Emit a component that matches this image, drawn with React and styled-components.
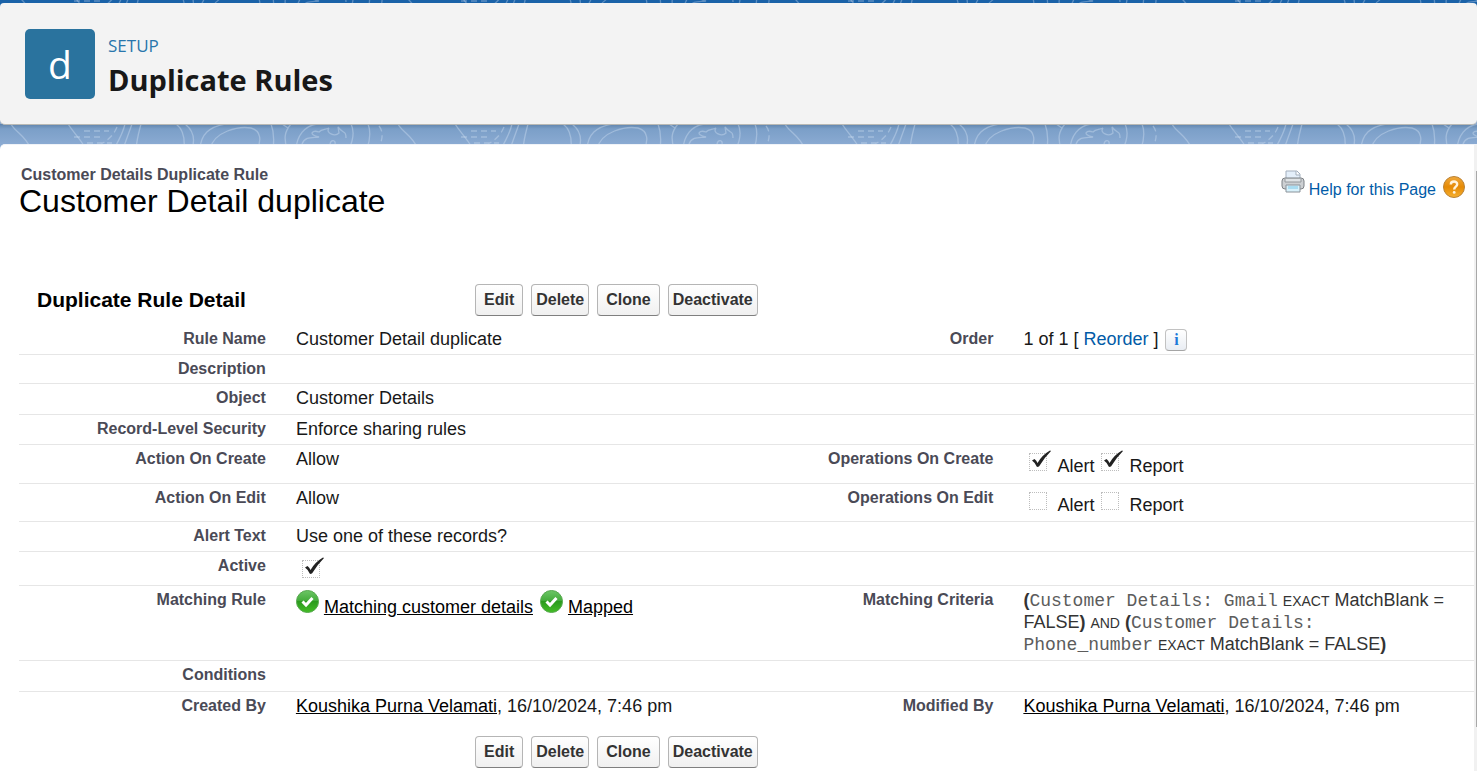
import React from "react";
import styled, { createGlobalStyle } from "styled-components";

const Global = createGlobalStyle`
  *, *::before, *::after { box-sizing: border-box; }
  body {
    margin: 0;
    background: #8aaad2;
    font-family: "Liberation Sans", Arial, sans-serif;
    color: #181818;
  }
`;

const Page = styled.div`
  display: flex;
  flex-direction: column;
  min-height: 100vh;
`;

const TopStrip = styled.div`
  height: 8px;
  margin-bottom: -5px;
  overflow: hidden;
  background: #1a62a8;
`;

const HeaderCard = styled.header`
  position: relative;
  display: flex;
  align-items: flex-start;
  gap: 13px;
  height: 122px;
  padding: 26px 25px;
  background: #f3f3f3;
  border-bottom: 1px solid #b9b9b4;
  border-radius: 4px 4px 5px 5px;
`;

const Tile = styled.div`
  width: 70px;
  height: 70px;
  border-radius: 5px;
  background: #2a739e;
  color: #fff;
  font: 39px/70px "Open Sans", "Noto Sans", sans-serif;
  text-align: center;
`;

const Titles = styled.div`
  display: flex;
  flex-direction: column;
  padding-top: 4px;
  font-family: "Open Sans", "Noto Sans", sans-serif;
`;

const Eyebrow = styled.span`
  color: #2876ac;
  font-size: 17px;
  line-height: 25px;
`;

const PageTitle = styled.h1`
  margin: 0;
  font-size: 29px;
  line-height: 44px;
  font-weight: 700;
  color: #181818;
`;

const Band = styled.div`
  height: 25px;
  margin: -1px 0 -5px;
  background: linear-gradient(#5f83ab, #7b9fc8 5px, #8aaad2 20px);
  overflow: hidden;
`;

const Panel = styled.main`
  position: relative;
  flex: 1;
  display: flex;
  background: #fff;
  border-top: 1px solid #f0f3f8;
  border-radius: 5px 0 0 0;
`;

const Content = styled.div`
  flex: 1;
  min-width: 0;
  padding: 21px 0 3px 19px;
`;

const ScrollTrack = styled.div`
  width: 3px;
  padding: 26px 0 44px 2px;
  background: #f1f1f1;
`;

const ScrollThumb = styled.div`
  height: 100%;
  background: #a8a8a8;
`;

const Intro = styled.div`
  display: flex;
  justify-content: space-between;
  height: 118px;
`;

const RecordType = styled.div`
  padding-left: 2px;
  font-size: 16px;
  line-height: 18px;
  font-weight: 700;
  color: #4a4a56;
`;

const RecordName = styled.h2`
  margin: 0;
  font-size: 32px;
  line-height: 34px;
  font-weight: 400;
  color: #000;
`;

const Help = styled.div`
  display: flex;
  align-items: flex-start;
  padding: 4px 9px 0 0;
`;

const HelpLink = styled.a`
  display: flex;
  align-items: flex-start;
  color: #015ba7;
  font-size: 16px;
  line-height: 18px;
  text-decoration: none;
`;

const HelpText = styled.span`
  padding: 11px 7px 0 4px;
`;

const HelpMark = styled.span`
  padding-top: 6px;
`;

const Toolbar = styled.div`
  display: flex;
  align-items: center;
  gap: 8px;
  height: 32px;
  padding-left: ${(p) => (p.$indent ? "456px" : "18px")};
`;

const SectionTitle = styled.h3`
  width: 430px;
  margin: 0;
  font-size: 21px;
  line-height: 32px;
  font-weight: 700;
  color: #000;
`;

const ActionButton = styled.button`
  height: 32px;
  padding: 0 ${(p) => (p.$roomy ? "8px" : "4px")} 1px;
  border: 1px solid #b5b5b5;
  border-bottom-color: #7f7f7f;
  border-radius: 4px;
  background: linear-gradient(#fff, #f0f0f0);
  color: #333;
  font: 700 16px/18px "Liberation Sans", Arial, sans-serif;
`;

const Details = styled.table`
  width: 100%;
  margin: 9px 0 12px;
  table-layout: fixed;
  border-collapse: collapse;
`;

const Row = styled.tr`
  height: ${(p) => p.$h}px;
  border-bottom: ${(p) => (p.$last ? "0" : "1px solid #e6e6e6")};
`;

const Label = styled.th`
  width: 18%;
  padding: 3px 15px 0;
  vertical-align: top;
  text-align: right;
  font-size: 16px;
  line-height: 22px;
  font-weight: 700;
  color: #4a4a56;
`;

const Value = styled.td`
  width: 32%;
  padding: 3px 15px 0;
  vertical-align: top;
  font-size: 18px;
  line-height: 22px;
  white-space: ${(p) => (p.$wrap ? "normal" : "nowrap")};
`;

const Line = styled.div`
  display: flex;
  align-items: flex-start;
`;

const BlueLink = styled.a`
  color: #015ba7;
  text-decoration: none;
`;

const BlackLink = styled.a`
  color: #000;
  text-decoration: underline;
`;

const InfoButton = styled.button`
  display: flex;
  align-items: center;
  justify-content: center;
  width: 22px;
  height: 22px;
  margin: 1px 0 0 7px;
  padding: 0;
  border: 1px solid #c2c2c2;
  border-bottom-color: #a5a5a5;
  border-radius: 4px;
  background: linear-gradient(#fff, #e9edf3);
  color: #1c7ad9;
  font: 700 16px/20px "Liberation Serif", serif;
`;

const Option = styled.label`
  display: flex;
  align-items: flex-start;
`;

const BoxWrap = styled.span`
  position: relative;
  display: block;
  width: 28px;
  height: 22px;
  padding: ${(p) => (p.$low ? "5px 0 0 6px" : "5px 0 0 0")};
`;

const Box = styled.input`
  appearance: none;
  display: block;
  width: 18px;
  height: 18px;
  margin: 0;
  border: 1px dotted #bdbdbd;
  background: #fff;
`;

const Tick = styled.svg`
  position: absolute;
  left: ${(p) => (p.$low ? "8px" : "2px")};
  top: 2px;
`;

const OptionText = styled.span`
  padding: 7px 7px 0 0;
`;

const Options = styled(Line)`
  padding-left: 6px;
`;

const Badge = styled.svg`
  flex: none;
  margin: ${(p) => (p.$next ? "1px 5px 0 7px" : "1px 5px 0 0")};
`;

const RuleLink = styled(BlackLink)`
  padding-top: 7px;
`;

const Criteria = styled.div`
  padding-right: 9px;
  color: #333;
`;

const Word = styled.span`
  white-space: nowrap;
`;

const Field = styled(Word)`
  font-family: "Liberation Mono", "Courier New", monospace;
  font-size: 18px;
  line-height: 18px;
  color: #5c5c5c;
`;

const FieldSpace = styled.span`
  font-family: "Liberation Mono", "Courier New", monospace;
  line-height: 18px;
`;

const Operator = styled.span`
  font-size: 14px;
  line-height: 18px;
`;

function Contours({ id, opacity, shift }) {
  return (
    <svg width="100%" height="25" aria-hidden="true">
      <defs>
        <pattern id={id} x="13" y={shift} width="387" height="25" patternUnits="userSpaceOnUse">
          <g fill="none" stroke="#d3e0f2" strokeOpacity={opacity} strokeWidth="1.3">
            <path d="M-2 0C2 8 12 11 18 25M55 0C60 8 66 13 73 25M112 0C110 9 107 14 101 25M119 0L110 25M128 0C126 8 124 14 123 25" />
            <path d="M163 0C170 5 172 14 171 25M172 0C181 7 182 16 179 25M187 25C188 10 196 3 212 0M197 25C201 7 226 2 238 4C249 7 248 18 244 25M258 0Q262 10 260 25M269 0L275 4M278 0C271 8 271 15 274 25" />
            <path d="M283 25C284 12 291 2 304 0M338 0Q343 10 336 25M355 0Q359 10 354 25M289 20C292 12 300 14 306 13C294 10 300 6 306 8C309 5 312 6 316 4C312 9 322 13 326 9L325 3C330 10 333 6 333 14M317 20C318 15 323 16 322 20" />
            <path d="M385 0C389 8 399 11 405 25" />
            <path strokeDasharray="6 4" d="M71 7H96M61 13H90M74 19H99M104 3C101 10 97 15 88 20M366 2Q371 8 368 18" />
          </g>
        </pattern>
      </defs>
      <rect width="100%" height="25" fill={`url(#${id})`} />
    </svg>
  );
}

function Printer() {
  return (
    <svg width="24" height="24" viewBox="0 0 24 24" aria-hidden="true">
      <path d="M5 10V1h11l3 3v6z" fill="#e4effa" stroke="#a3afbd" />
      <path d="M15 1v4h4" fill="#fff" stroke="#a3afbd" />
      <rect x="1" y="8" width="22" height="11" rx="3" fill="#cdd0d3" stroke="#7d8186" />
      <path d="M4 9v3h16V9" fill="#dfe3e6" stroke="#94989d" />
      <path d="M5 15h14v7H5z" fill="#d8f1fb" stroke="#8b9299" />
      <path d="M7 16h10v3H7z" fill="#a9dcf1" />
    </svg>
  );
}

function HelpBall() {
  return (
    <svg width="22" height="22" viewBox="0 0 22 22" aria-hidden="true">
      <defs>
        <linearGradient id="ball" x1="0" y1="0" x2="0" y2="1">
          <stop offset="0" stopColor="#f0a93c" />
          <stop offset=".5" stopColor="#e58a05" />
          <stop offset="1" stopColor="#f6b030" />
        </linearGradient>
      </defs>
      <circle cx="11" cy="11" r="10.5" fill="url(#ball)" stroke="#b98236" />
      <path d="M7.8 8.4C7.8 4.6 14.2 4.6 14.2 8.2C14.2 10.6 11.2 10.6 11.2 13.4" fill="none" stroke="#fff3dc" strokeWidth="2.4" />
      <circle cx="11.2" cy="16.4" r="1.4" fill="#fff3dc" />
    </svg>
  );
}

function Check({ low, checked, ...rest }) {
  return (
    <BoxWrap $low={low}>
      <Box type="checkbox" checked={checked} readOnly {...rest} />
      {checked && (
        <Tick $low={low} width="20" height="20" viewBox="0 0 20 20" aria-hidden="true">
          <path d="M1 10.5L3.5 9Q5.5 10.5 6.5 13Q11 5 19 0.5L20 1Q13 8 8 16.5L6 17Q4 12.5 1 10.5Z" fill="#222" />
        </Tick>
      )}
    </BoxWrap>
  );
}

function GreenBadge({ next }) {
  const id = next ? "green-b" : "green-a";
  return (
    <Badge $next={next} width="23" height="23" viewBox="0 0 23 23" aria-hidden="true">
      <defs>
        <linearGradient id={id} x1="0" y1="0" x2="0" y2="1">
          <stop offset="0" stopColor="#6cc566" />
          <stop offset=".45" stopColor="#45ad3c" />
          <stop offset=".5" stopColor="#2b9a1e" />
          <stop offset="1" stopColor="#43bd25" />
        </linearGradient>
      </defs>
      <circle cx="11.5" cy="11.5" r="11" fill={`url(#${id})`} stroke="#56a84e" />
      <path d="M6.5 11.5L10 15L16.5 8" fill="none" stroke="#fff" strokeWidth="3" />
    </Badge>
  );
}

function Buttons() {
  return (
    <>
      <ActionButton type="button" $roomy>Edit</ActionButton>
      <ActionButton type="button">Delete</ActionButton>
      <ActionButton type="button" $roomy>Clone</ActionButton>
      <ActionButton type="button">Deactivate</ActionButton>
    </>
  );
}

function Operations({ checked }) {
  return (
    <Options>
      <Option><Check checked={checked} /><OptionText>Alert</OptionText></Option>
      <Option><Check checked={checked} /><OptionText>Report</OptionText></Option>
    </Options>
  );
}

function Person() {
  return (
    <>
      <BlackLink href="#user">Koushika Purna Velamati</BlackLink>, 16/10/2024, 7:46 pm
    </>
  );
}

const rows = [
  { h: 29, label: "Rule Name", value: "Customer Detail duplicate", label2: "Order",
    value2: (
      <Line>
        <span>1 of 1 [ <BlueLink href="#reorder">Reorder</BlueLink> ]</span>
        <InfoButton type="button" aria-label="Order information">i</InfoButton>
      </Line>
    ) },
  { h: 29, label: "Description" },
  { h: 31, label: "Object", value: "Customer Details" },
  { h: 30, label: "Record-Level Security", value: "Enforce sharing rules" },
  { h: 39, label: "Action On Create", value: "Allow", label2: "Operations On Create", value2: <Operations checked /> },
  { h: 38, label: "Action On Edit", value: "Allow", label2: "Operations On Edit", value2: <Operations checked={false} /> },
  { h: 30, label: "Alert Text", value: "Use one of these records?" },
  { h: 34, label: "Active", value: <Check low checked aria-label="Active" /> },
  { h: 75, label: "Matching Rule",
    value: (
      <Line>
        <GreenBadge />
        <RuleLink href="#matching">Matching customer details</RuleLink>
        <GreenBadge next />
        <RuleLink href="#mapped">Mapped</RuleLink>
      </Line>
    ),
    label2: "Matching Criteria",
    wrap: true,
    value2: (
      <Criteria>
        <b>(</b><Field>Customer Details:</Field><FieldSpace> </FieldSpace><Field>Gmail</Field>{" "}
        <Operator>EXACT</Operator> <Word>MatchBlank =</Word> <Word>FALSE<b>)</b></Word>{" "}
        <Operator>AND</Operator> <b>(</b><Field>Customer Details:</Field><FieldSpace> </FieldSpace><Field>Phone_number</Field>{" "}
        <Operator>EXACT</Operator> <Word>MatchBlank =</Word> <Word>FALSE<b>)</b></Word>
      </Criteria>
    ) },
  { h: 31, label: "Conditions" },
  { h: 33, label: "Created By", value: <Person />, label2: "Modified By", value2: <Person /> },
];

export default function App() {
  return (
    <Page>
      <Global />
      <TopStrip><Contours id="top-lines" opacity=".35" shift="-12" /></TopStrip>
      <HeaderCard>
        <Tile>d</Tile>
        <Titles>
          <Eyebrow>SETUP</Eyebrow>
          <PageTitle>Duplicate Rules</PageTitle>
        </Titles>
      </HeaderCard>
      <Band><Contours id="band-lines" opacity=".4" shift="0" /></Band>
      <Panel>
        <Content>
          <Intro>
            <div>
              <RecordType>Customer Details Duplicate Rule</RecordType>
              <RecordName>Customer Detail duplicate</RecordName>
            </div>
            <Help>
              <HelpLink href="#help">
                <Printer />
                <HelpText>Help for this Page</HelpText>
                <HelpMark><HelpBall /></HelpMark>
              </HelpLink>
            </Help>
          </Intro>
          <Toolbar>
            <SectionTitle>Duplicate Rule Detail</SectionTitle>
            <Buttons />
          </Toolbar>
          <Details>
            <tbody>
              {rows.map((r, i) => (
                <Row key={r.label} $h={r.h} $last={i === rows.length - 1}>
                  <Label scope="row">{r.label}</Label>
                  <Value>{r.value}</Value>
                  <Label scope="row">{r.label2}</Label>
                  <Value $wrap={r.wrap}>{r.value2}</Value>
                </Row>
              ))}
            </tbody>
          </Details>
          <Toolbar $indent>
            <Buttons />
          </Toolbar>
        </Content>
        <ScrollTrack><ScrollThumb /></ScrollTrack>
      </Panel>
    </Page>
  );
}
